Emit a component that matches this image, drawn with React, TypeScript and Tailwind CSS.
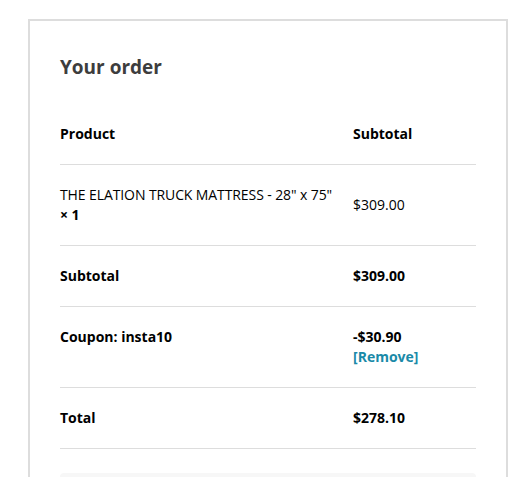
export default function App() {
  const font = { fontFamily: '"Open Sans", "Liberation Sans", sans-serif' };
  const cell = "py-[20px] text-[14px] leading-[20px] text-black";

  return (
    <div className="min-h-screen bg-white pt-[19px] pl-[28px]" style={font}>
      <div className="w-[480px] border-2 border-[#dddddd] px-[30px] pt-[34px] pb-[30px]">
        <h3 className="text-[19px] leading-[24px] font-bold text-[#3d3d3d] mb-[25px]">Your order</h3>

        <div className="grid grid-cols-[293px_1fr]">
          {/* head */}
          <div className={`${cell} font-bold border-b border-[#dddddd]`}>Product</div>
          <div className={`${cell} font-bold border-b border-[#dddddd]`}>Subtotal</div>

          {/* item */}
          <div className={`${cell} pr-[4px] tracking-[-0.1px] border-b border-[#dddddd]`}>
            THE ELATION TRUCK MATTRESS - 28" x 75"{" "}
            <strong className="font-bold whitespace-nowrap">×&nbsp;1</strong>
          </div>
          <div className={`${cell} flex items-center border-b border-[#dddddd]`}>$309.00</div>

          {/* subtotal */}
          <div className={`${cell} font-bold border-b border-[#dddddd]`}>Subtotal</div>
          <div className={`${cell} font-bold border-b border-[#dddddd]`}>$309.00</div>

          {/* coupon */}
          <div className={`${cell} font-bold border-b border-[#dddddd]`}>Coupon: insta10</div>
          <div className={`${cell} font-bold border-b border-[#dddddd]`}>
            <div>-$30.90</div>
            <a href="#" className="block text-[#1a8aa8]">[Remove]</a>
          </div>

          {/* total */}
          <div className={`${cell} font-bold border-b border-[#dddddd]`}>Total</div>
          <div className={`${cell} font-bold border-b border-[#dddddd]`}>$278.10</div>
        </div>

        <div className="mt-[24px] h-[60px] rounded-[4px] bg-[#f7f7f7]" />
      </div>
    </div>
  );
}
